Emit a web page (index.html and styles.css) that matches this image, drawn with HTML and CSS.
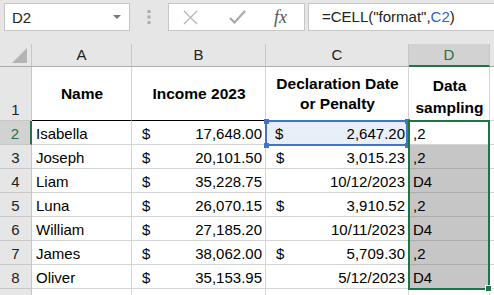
FILE: index.html
```html
<!DOCTYPE html>
<html lang="en">
  <head>
    <meta charset="UTF-8" />
    <title>Sheet</title>
    <link rel="stylesheet" href="styles.css">
  </head>
  <body>
    <div class="toolbar"><!-- name box and formula bar -->
      <div class="namebox">
        <span>D2</span>
        <svg class="caret" width="8" height="5" viewBox="0 0 8 5"><path d="M0 0h8L4 4z" fill="#777"/></svg>
      </div>
      <svg class="grip" width="4" height="14" viewBox="0 0 4 14">
        <rect x="0.5" y="0" width="3" height="3" fill="#aaa"/>
        <rect x="0.5" y="5.5" width="3" height="3" fill="#aaa"/>
        <rect x="0.5" y="11" width="3" height="3" fill="#aaa"/>
      </svg>
      <div class="fbtns">
        <svg width="15" height="15" viewBox="0 0 15 15"><path d="M1 1L14 14M14 1L1 14" stroke="#b8b8b8" stroke-width="1.4" fill="none"/></svg>
        <svg width="17" height="14" viewBox="0 0 17 14"><path d="M1 8L5.5 12.5L16 1" stroke="#a8a8a8" stroke-width="2.2" fill="none"/></svg>
        <span class="fx">fx</span>
      </div>
      <div class="formula">=CELL("format",<span class="ref">C2</span>)</div>
    </div>

    <div class="sheet">
      <div class="corner"></div>
      <div class="ch">A</div>
      <div class="ch">B</div>
      <div class="ch">C</div>
      <div class="ch on">D</div>
      <div class="ch blank"></div>

      <div class="rh">1</div>
      <div class="c hd">Name</div>
      <div class="c hd">Income 2023</div>
      <div class="c hd">Declaration Date<br>or Penalty</div>
      <div class="c hd low">Data<br>sampling</div>
      <div class="c"></div>

      <div class="rh on">2</div>
      <div class="c">Isabella</div>
      <div class="c acc"><span>$</span><span>17,648.00</span></div>
      <div class="c acc ref"><span>$</span><span>2,647.20</span></div>
      <div class="c">,2</div>
      <div class="c"></div>

      <div class="rh">3</div>
      <div class="c">Joseph</div>
      <div class="c acc"><span>$</span><span>20,101.50</span></div>
      <div class="c acc"><span>$</span><span>3,015.23</span></div>
      <div class="c sel">,2</div>
      <div class="c"></div>

      <div class="rh">4</div>
      <div class="c">Liam</div>
      <div class="c acc"><span>$</span><span>35,228.75</span></div>
      <div class="c dt">10/12/2023</div>
      <div class="c sel">D4</div>
      <div class="c"></div>

      <div class="rh">5</div>
      <div class="c">Luna</div>
      <div class="c acc"><span>$</span><span>26,070.15</span></div>
      <div class="c acc"><span>$</span><span>3,910.52</span></div>
      <div class="c sel">,2</div>
      <div class="c"></div>

      <div class="rh">6</div>
      <div class="c">William</div>
      <div class="c acc"><span>$</span><span>27,185.20</span></div>
      <div class="c dt">10/11/2023</div>
      <div class="c sel">D4</div>
      <div class="c"></div>

      <div class="rh">7</div>
      <div class="c">James</div>
      <div class="c acc"><span>$</span><span>38,062.00</span></div>
      <div class="c acc"><span>$</span><span>5,709.30</span></div>
      <div class="c sel">,2</div>
      <div class="c"></div>

      <div class="rh">8</div>
      <div class="c">Oliver</div>
      <div class="c acc"><span>$</span><span>35,153.95</span></div>
      <div class="c dt">5/12/2023</div>
      <div class="c sel">D4</div>
      <div class="c"></div>

      <div class="rh"></div><!-- row 9, cut off by the window -->
      <div class="c"></div>
      <div class="c"></div>
      <div class="c"></div>
      <div class="c"></div>
      <div class="c"></div>

      <div class="refbox"><!-- blue reference box on C2 -->
        <i class="h tl"></i><i class="h tr"></i><i class="h bl"></i><i class="h br"></i>
      </div>
      <div class="selbox"><i class="fill"></i></div><!-- green selection D2:D8 -->
    </div>
  </body>
</html>
```

FILE: styles.css
```css
/* page */
* {
  margin: 0;
  padding: 0;
  box-sizing: border-box;
}
body {
  width: 494px;
  height: 295px;
  overflow: hidden;
  background: #e6e6e6;
  font-family: "Liberation Sans", Arial, sans-serif;
  font-size: 15px;
  color: #000;
}

/* formula bar */
.toolbar {
  height: 44px;
  display: flex;
  align-items: flex-start;
  padding-top: 3px;
  padding-left: 4px;
}
.namebox {
  width: 126px;
  height: 28px;
  background: #fff;
  border: 1px solid #c6c6c6;
  display: flex;
  align-items: center;
  justify-content: space-between;
  padding: 0 8px 0 7px;
  color: #222;
}
.grip {
  margin: 7px 0 0 17px;
}
.fbtns {
  width: 137px;
  height: 28px;
  margin-left: 17px;
  background: #fff;
  border: 1px solid #c6c6c6;
  display: flex;
  align-items: center;
  padding-left: 14px;
}
.fbtns svg + svg {
  margin-left: 31px;
}
.fx {
  margin-left: 28px;
  font-family: "Liberation Serif", "Times New Roman", serif;
  font-style: italic;
  font-size: 18px;
  color: #555;
}
.formula {
  flex: 1;
  height: 28px;
  margin-left: 3px;
  background: #fff;
  border: 1px solid #c6c6c6;
  border-right: none;
  padding-left: 13px;
  line-height: 26px;
  color: #222;
}
.formula .ref {
  color: #2f63c4;
}

/* grid */
.sheet {
  position: relative;
  display: grid;
  grid-template-columns: 32px 100px 134px 143px 81px 1fr;
  grid-template-rows: 23px 54px repeat(8, 24px);
  background: #fff;
}
.corner {
  background: #e6e6e6;
  border-right: 1px solid #c6c6c6;
  border-bottom: 1px solid #ababab;
  position: relative;
}
.corner::after {
  content: "";
  position: absolute;
  right: 4px;
  bottom: 3px;
  border-left: 15px solid transparent;
  border-bottom: 15px solid #b4b4b4;
}
.ch {
  background: #e6e6e6;
  border-right: 1px solid #c6c6c6;
  border-bottom: 1px solid #ababab;
  text-align: center;
  line-height: 22px;
  color: #222;
}
.ch.blank {
  border-right: none;
}
.ch.on {
  background: #d2d2d2;
  color: #217346;
  border-bottom: 2px solid #217346;
}
.rh {
  background: #e6e6e6;
  border-right: 1px solid #c6c6c6;
  border-bottom: 1px solid #c6c6c6;
  display: flex;
  align-items: flex-end;
  justify-content: center;
  line-height: 20px;
  color: #222;
}
.rh.on {
  background: #d2d2d2;
  color: #217346;
  border-right: 2px solid #217346;
}
.c {
  border-right: 1px solid #d4d4d4;
  border-bottom: 1px solid #d4d4d4;
  display: flex;
  align-items: flex-end;
  padding: 0 3px 0 4px;
  line-height: 20px;
  white-space: nowrap;
}
.c.hd {
  font-weight: bold;
  font-size: 15.5px;
  align-items: center;
  justify-content: center;
  text-align: center;
  border-bottom: 1px solid #000;
}
.c.hd.low {
  align-items: flex-end;
  line-height: 22px;
  padding-bottom: 1px;
}
.c.acc {
  justify-content: space-between;
  padding-left: 10px;
}
.c.dt {
  justify-content: flex-end;
}
.c.ref {
  background: #e9eff9;
  padding-left: 9px;
}
.c.sel {
  background: #c6c6c6;
  border-bottom-color: #acacac;
}

/* overlays */
.refbox {
  position: absolute;
  left: 265px;
  top: 76px;
  width: 143px;
  height: 26px;
  border: 2px solid #4472c4;
}
.h {
  position: absolute;
  width: 5px;
  height: 5px;
  background: #4472c4;
}
.tl { left: -3.5px; top: -3.5px; }
.tr { right: -3.5px; top: -3.5px; }
.bl { left: -3.5px; bottom: -3.5px; }
.br { right: -3.5px; bottom: -3.5px; }
.selbox {
  position: absolute;
  left: 408px;
  top: 76px;
  width: 82px;
  height: 170px;
  border: 2px solid #217346;
}
.fill {
  position: absolute;
  right: -4px;
  bottom: -4px;
  width: 7px;
  height: 7px;
  background: #217346;
  border: 1px solid #fff;
}
```
